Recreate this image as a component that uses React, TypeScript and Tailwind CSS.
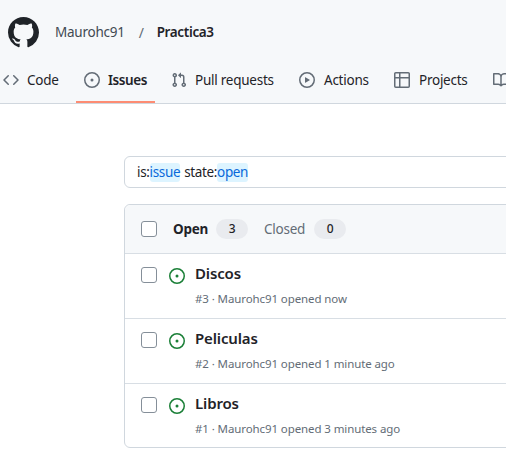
import type { ReactNode } from 'react'

const paths = {
  mark: 'M8 0c4.42 0 8 3.58 8 8a8.013 8.013 0 0 1-5.45 7.59c-.4.08-.55-.17-.55-.38 0-.27.01-1.13.01-2.2 0-.75-.25-1.23-.54-1.48 1.78-.2 3.65-.88 3.65-3.95 0-.88-.31-1.59-.82-2.15.08-.2.36-1.02-.08-2.12 0 0-.67-.22-2.2.82-.64-.18-1.32-.27-2-.27-.68 0-1.36.09-2 .27-1.53-1.03-2.2-.82-2.2-.82-.44 1.1-.16 1.92-.08 2.12-.51.56-.82 1.28-.82 2.15 0 3.06 1.86 3.75 3.64 3.95-.23.2-.44.55-.51 1.07-.46.21-1.61.55-2.33-.66-.15-.24-.6-.83-1.23-.82-.67.01-.27.38.01.53.34.19.73.9.82 1.13.16.45.68 1.31 2.69.94 0 .67.01 1.3.01 1.49 0 .21-.15.45-.55.38A7.995 7.995 0 0 1 0 8c0-4.42 3.58-8 8-8Z',
  code: 'm11.28 3.22 4.25 4.25a.75.75 0 0 1 0 1.06l-4.25 4.25a.749.749 0 0 1-1.275-.326.749.749 0 0 1 .215-.734L13.94 8l-3.72-3.72a.749.749 0 0 1 .326-1.275.749.749 0 0 1 .734.215Zm-6.56 0a.751.751 0 0 1 1.042.018.751.751 0 0 1 .018 1.042L2.06 8l3.72 3.72a.749.749 0 0 1-.326 1.275.749.749 0 0 1-.734-.215L.47 8.53a.75.75 0 0 1 0-1.06Z',
  issue: 'M8 9.5a1.5 1.5 0 1 0 0-3 1.5 1.5 0 0 0 0 3ZM8 0a8 8 0 1 1 0 16A8 8 0 0 1 8 0ZM1.5 8a6.5 6.5 0 1 0 13 0 6.5 6.5 0 0 0-13 0Z',
  pull: 'M1.5 3.25a2.25 2.25 0 1 1 3 2.122v5.256a2.251 2.251 0 1 1-1.5 0V5.372A2.25 2.25 0 0 1 1.5 3.25Zm5.677-.177L9.573.677A.25.25 0 0 1 10 .854V2.5h1A2.5 2.5 0 0 1 13.5 5v5.628a2.251 2.251 0 1 1-1.5 0V5a1 1 0 0 0-1-1h-1v1.646a.25.25 0 0 1-.427.177L7.177 3.427a.25.25 0 0 1 0-.354ZM3.75 2.5a.75.75 0 1 0 0 1.5.75.75 0 0 0 0-1.5Zm0 9.5a.75.75 0 1 0 0 1.5.75.75 0 0 0 0-1.5Zm8.25.75a.75.75 0 1 0 1.5 0 .75.75 0 0 0-1.5 0Z',
  play: 'M8 0a8 8 0 1 1 0 16A8 8 0 0 1 8 0ZM1.5 8a6.5 6.5 0 1 0 13 0 6.5 6.5 0 0 0-13 0Zm4.879-2.773 4.264 2.559a.25.25 0 0 1 0 .428l-4.264 2.559A.25.25 0 0 1 6 10.559V5.442a.25.25 0 0 1 .379-.215Z',
  table: 'M0 1.75C0 .784.784 0 1.75 0h12.5C15.216 0 16 .784 16 1.75v12.5A1.75 1.75 0 0 1 14.25 16H1.75A1.75 1.75 0 0 1 0 14.25ZM6.5 6.5v8h7.75a.25.25 0 0 0 .25-.25V6.5Zm8-1.5V1.75a.25.25 0 0 0-.25-.25H6.5V5Zm-13 1.5v7.75c0 .138.112.25.25.25H5v-8ZM5 5V1.5H1.75a.25.25 0 0 0-.25.25V5Z',
  book: 'M0 1.75A.75.75 0 0 1 .75 1h4.253c1.227 0 2.317.59 3 1.501A3.743 3.743 0 0 1 11.006 1h4.245a.75.75 0 0 1 .75.75v10.5a.75.75 0 0 1-.75.75h-4.507a2.25 2.25 0 0 0-1.591.659l-.622.621a.75.75 0 0 1-1.06 0l-.622-.621A2.25 2.25 0 0 0 5.258 13H.75a.75.75 0 0 1-.75-.75Zm7.251 10.324.004-5.073-.002-2.253A2.25 2.25 0 0 0 5.003 2.5H1.5v9h3.757a3.75 3.75 0 0 1 1.994.574ZM8.755 4.75l-.004 7.322a3.752 3.752 0 0 1 1.992-.572H14.5v-9h-3.495a2.25 2.25 0 0 0-2.25 2.25Z',
}

function Octicon({ d, className }: { d: string; className: string }) {
  return (
    <svg viewBox="0 0 16 16" fill="currentColor" fillRule="evenodd" className={className}>
      <path d={d} />
    </svg>
  )
}

function Tab({ icon, children, active, className }: { icon: string; children?: ReactNode; active?: boolean; className: string }) {
  return (
    <div className={`flex h-full shrink-0 items-center border-b-2 px-2 pb-[5px] ${active ? 'border-[#fd8c73] font-semibold tracking-[-0.4px]' : 'border-transparent'} ${className}`}>
      <Octicon d={icon} className="h-4 w-4 shrink-0 text-[#636c76]" />
      {children && <span>{children}</span>}
    </div>
  )
}

function Checkbox() {
  return <div className="h-4 w-4 shrink-0 rounded-[3px] border border-[#858f99] bg-white" />
}

function IssueRow({ title, meta }: { title: string; meta: string }) {
  return (
    <div className="flex h-[65px] border-t border-[#d8dee4] pl-4 pt-[8px] last:h-[64px]">
      <div className="mt-[5px]"><Checkbox /></div>
      <Octicon d={paths.issue} className="ml-[12px] mt-[6px] h-4 w-4 text-[#1a7f37]" />
      <div className="ml-[10px]">
        <div className="-mt-[1px] text-[15px] font-semibold leading-[24px] tracking-[-0.14px] text-[#1f2328]">{title}</div>
        <div className="mt-[5px] text-[11.5px] leading-[18px] tracking-[-0.1px] text-[#636c76]">{meta}</div>
      </div>
    </div>
  )
}

export default function App() {
  return (
    <div className="h-[452px] w-[506px] overflow-hidden bg-white font-['Noto_Sans',sans-serif] text-[13.5px] tracking-[-0.25px] text-[#1f2328]">
      <header className="h-[104px] border-b border-[#d0d7de] bg-[#f6f8fa]">
        <div className="flex h-[64px] items-center pl-2">
          <Octicon d={paths.mark} className="h-[31px] w-[31px] text-[#1f2328]" />
          <span className="ml-[16px] text-[#424a53]">Maurohc91</span>
          <span className="ml-[14px] mr-[13px] text-[14px] text-[#636c76]">/</span>
          <span className="font-semibold tracking-[-0.35px]">Practica3</span>
        </div>
        <nav className="-ml-[5px] flex h-[39px] w-[600px] gap-2">
          <Tab icon={paths.code} className="w-[73px] gap-2">Code</Tab>
          <Tab icon={paths.issue} active className="w-[79px] gap-2">Issues</Tab>
          <Tab icon={paths.pull} className="w-[120px] gap-2">Pull requests</Tab>
          <Tab icon={paths.play} className="w-[87px] gap-[9px]">Actions</Tab>
          <Tab icon={paths.table} className="w-[91px] gap-[9px]">Projects</Tab>
          <Tab icon={paths.book} className="w-[32px]" />
        </nav>
      </header>

      <main className="w-[900px] pl-[124px] pt-[52px]">
        <div className="flex h-[32px] items-center rounded-md border border-[#d0d7de] bg-white pl-3 leading-[19px] tracking-[-0.35px]">
          <span>is:</span>
          <span className="rounded-[3px] bg-[#ddf4ff] text-[#0969da]">issue</span>
          <span className="ml-1">state:</span>
          <span className="rounded-[3px] bg-[#ddf4ff] text-[#0969da]">open</span>
        </div>

        <div className="mt-4 rounded-md border border-[#d0d7de] bg-white">
          <div className="flex h-[48px] items-center rounded-t-md bg-[#f6f8fa] pl-4">
            <Checkbox />
            <span className="ml-[16px] font-bold">Open</span>
            <span className="ml-2 flex h-5 w-8 items-center justify-center rounded-full bg-[#e9ebef] text-[12px] font-medium">3</span>
            <span className="ml-4 text-[#636c76]">Closed</span>
            <span className="ml-[9px] flex h-5 w-8 items-center justify-center rounded-full bg-[#e9ebef] text-[12px] font-medium">0</span>
          </div>
          <IssueRow title="Discos" meta="#3 · Maurohc91 opened now" />
          <IssueRow title="Peliculas" meta="#2 · Maurohc91 opened 1 minute ago" />
          <IssueRow title="Libros" meta="#1 · Maurohc91 opened 3 minutes ago" />
        </div>
      </main>
    </div>
  )
}
